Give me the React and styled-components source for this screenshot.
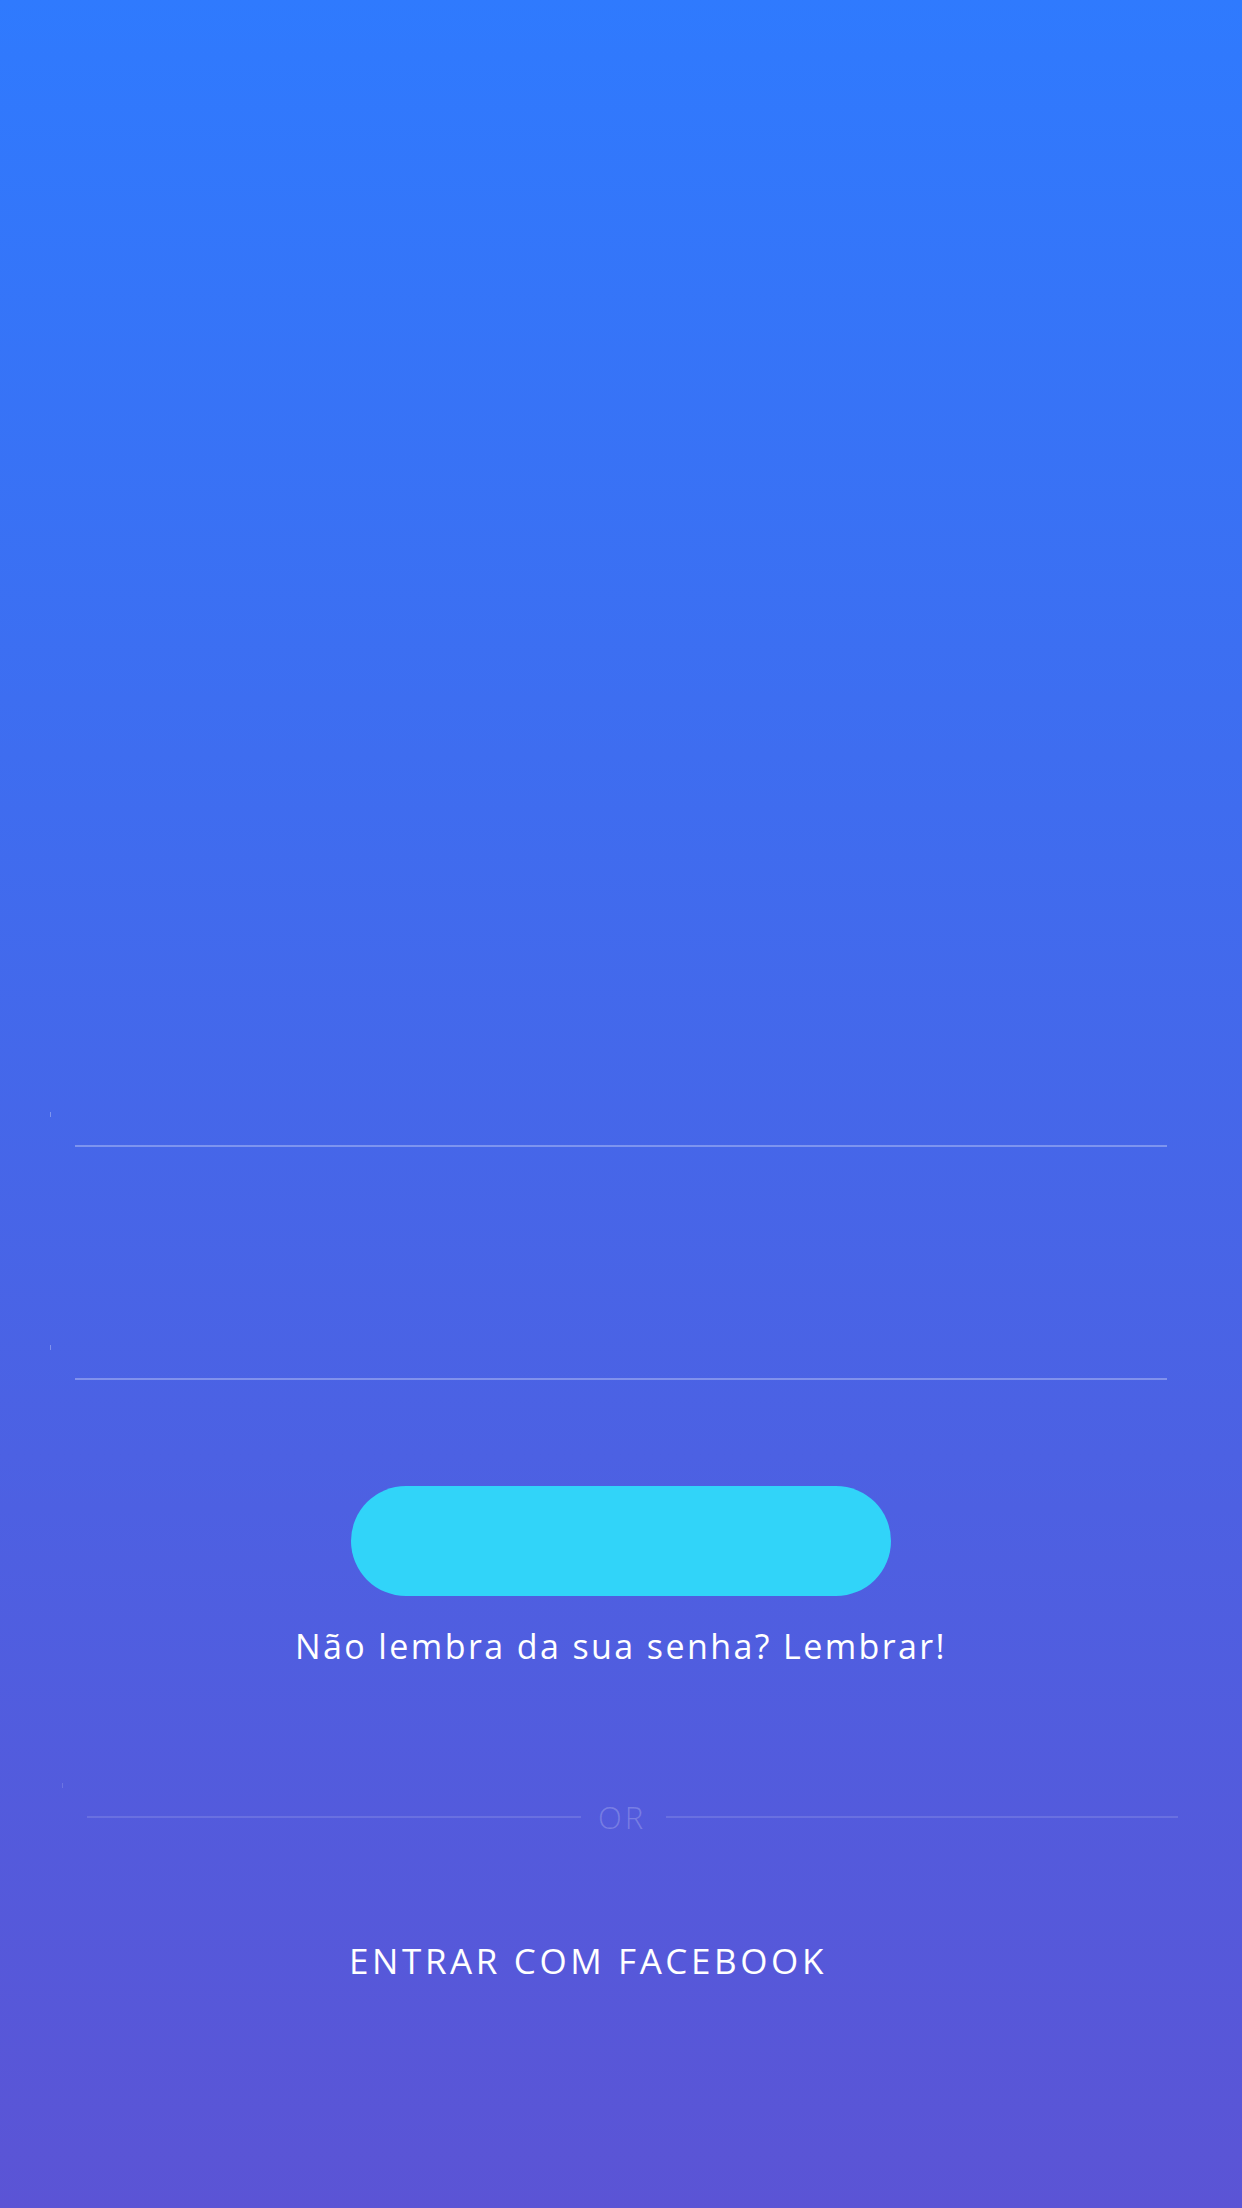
import React from "react";
import styled, {createGlobalStyle} from "styled-components";

const GlobalStyle = createGlobalStyle`
  html, body {
    margin: 0;
    padding: 0;
  }
  body {
    font-family: "Open Sans", "Liberation Sans", sans-serif;
  }
`

const StyledLoginPage = styled.div`
  width: 1242px;
  height: 2208px;
  box-sizing: border-box;
  padding-top: 1112px;
  display: flex;
  flex-direction: column;
  background: linear-gradient(180deg, #2f7afe 0%, #5b54d5 100%);
  overflow: hidden;
`

const Field = styled.div`
  display: flex;
  flex-direction: column;
  padding-left: 50px;
  margin-top: ${props => props.$offset || 0}px;
`

const Marker = styled.div`
  width: 1px;
  height: 5px;
  background-color: rgba(255, 255, 255, ${props => props.$alpha || 0.3});
`

const Underline = styled.div`
  height: 2px;
  margin: 28px 75px 0 25px;
  background-color: rgba(255, 255, 255, 0.3);
`

const SubmitButton = styled.button`
  align-self: center;
  width: 540px;
  height: 110px;
  margin-top: 106px;
  border: none;
  border-radius: 55px;
  background-color: #31d4f9;
`

const ForgotText = styled.div`
  margin-top: 30px;
  text-align: center;
  font-size: 34px;
  line-height: 40px;
  letter-spacing: 2.4px;
  color: #ffffff;
`

const Divider = styled.div`
  display: flex;
  flex-direction: column;
  padding-left: 62px;
  margin-top: 117px;
`

const DividerRow = styled.div`
  display: flex;
  align-items: center;
  margin: 11px 64px 0 25px;
`

const DividerLine = styled.div`
  height: 2px;
  flex: ${props => props.$width ? `0 0 ${props.$width}px` : 1};
  background-color: rgba(255, 255, 255, 0.13);
`

const OrText = styled.span`
  margin: 0 20px 0 17px;
  font-size: 31px;
  font-weight: 300;
  line-height: 36px;
  letter-spacing: 3px;
  color: rgba(255, 255, 255, 0.22);
`

const FacebookButton = styled.div`
  display: flex;
  justify-content: center;
  margin: 106px 66px 0 0;
  font-size: 35px;
  line-height: 40px;
  letter-spacing: 3.6px;
  color: #ffffff;
`

const App = () => {
    return (
        <>
            <GlobalStyle/>
            <StyledLoginPage>
                <Field>
                    <Marker/>
                    <Underline/>
                </Field>
                <Field $offset={198}>
                    <Marker/>
                    <Underline/>
                </Field>
                <SubmitButton/>
                <ForgotText>Não lembra da sua senha? Lembrar!</ForgotText>
                <Divider>
                    <Marker $alpha={0.15}/>
                    <DividerRow>
                        <DividerLine $width={494}/>
                        <OrText>OR</OrText>
                        <DividerLine/>
                    </DividerRow>
                </Divider>
                <FacebookButton>ENTRAR COM FACEBOOK</FacebookButton>
            </StyledLoginPage>
        </>
    )
}

export default App
